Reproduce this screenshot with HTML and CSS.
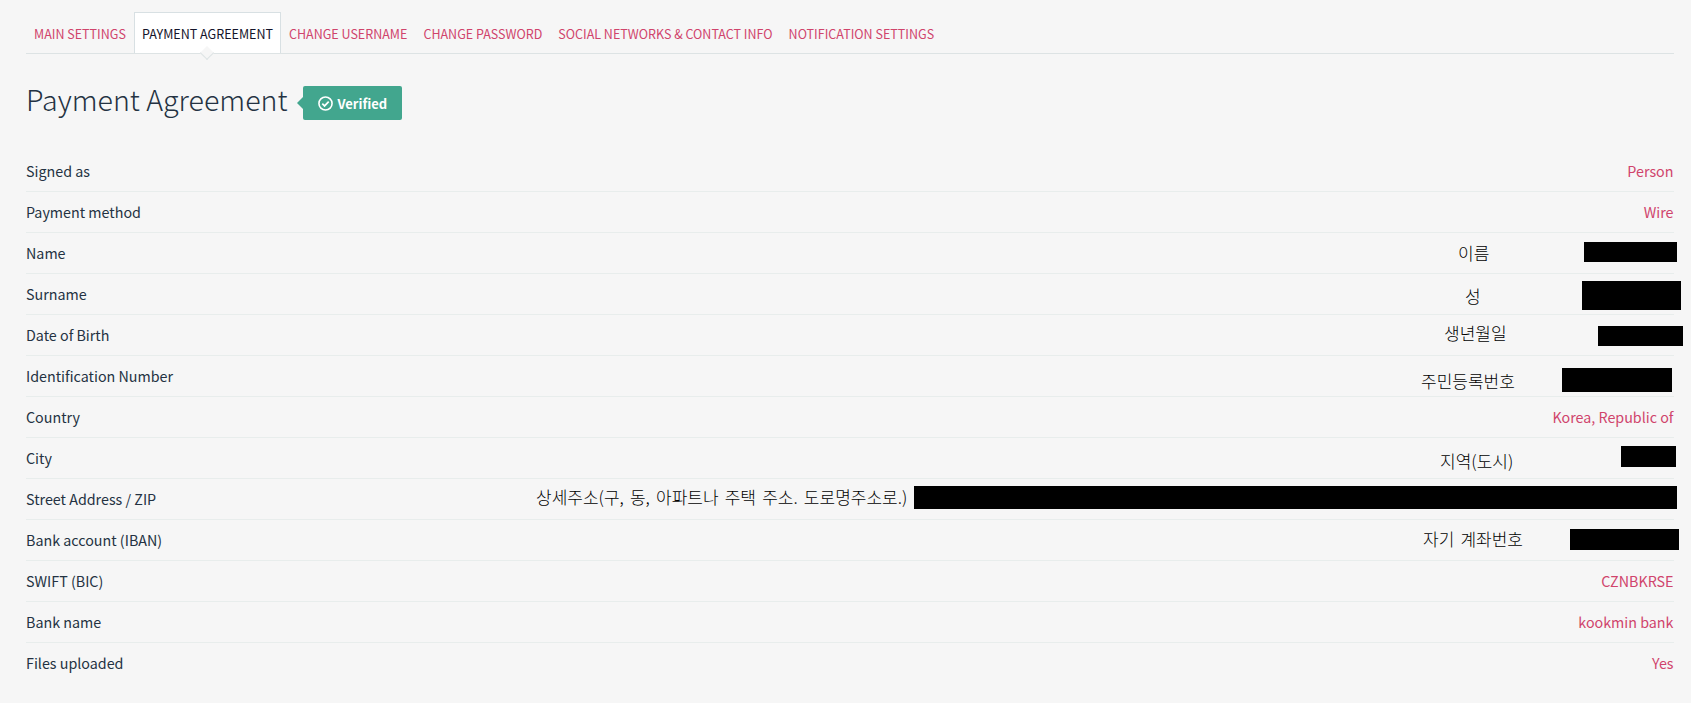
FILE: index.html
```html
<!DOCTYPE html>
<html lang="en">

<head>
    <meta charset="UTF-8">
    <meta name="viewport" content="width=device-width, initial-scale=1.0">
    <title>Payment Agreement</title>
    <link rel="stylesheet" href="styles.css">
</head>

<body>
    <div class="tabs">
        <a class="tab">Main settings</a>
        <a class="tab active">Payment agreement</a>
        <a class="tab">Change username</a>
        <a class="tab">Change password</a>
        <a class="tab">Social networks &amp; contact info</a>
        <a class="tab">Notification settings</a>
    </div>
    <div class="heading">
        <h1>Payment Agreement</h1>
        <span class="badge">
            <svg class="check" viewBox="0 0 16 16" width="15" height="15">
                <circle cx="8" cy="8" r="7" fill="none" stroke="#fff" stroke-width="1.7"></circle>
                <path d="M4.6 8.2l2.4 2.4 4.4-4.6" fill="none" stroke="#fff" stroke-width="1.8"></path>
            </svg>
            Verified
        </span>
    </div>
    <div class="rows">
        <div class="row"><span>Signed as</span><span class="value">Person</span></div>
        <div class="row"><span>Payment method</span><span class="value">Wire</span></div>
        <div class="row"><span>Name</span></div>
        <div class="row"><span>Surname</span></div>
        <div class="row"><span>Date of Birth</span></div>
        <div class="row"><span>Identification Number</span></div>
        <div class="row"><span>Country</span><span class="value">Korea, Republic of</span></div>
        <div class="row"><span>City</span></div>
        <div class="row"><span>Street Address / ZIP</span></div>
        <div class="row"><span>Bank account (IBAN)</span></div>
        <div class="row"><span>SWIFT (BIC)</span><span class="value">CZNBKRSE</span></div>
        <div class="row"><span>Bank name</span><span class="value">kookmin bank</span></div>
        <div class="row"><span>Files uploaded</span><span class="value">Yes</span></div>
    </div>

    <!-- notes and black bars pasted over the screenshot -->
    <span class="note note-name">이름</span>
    <span class="note note-surname">성</span>
    <span class="note note-birth">생년월일</span>
    <span class="note note-id">주민등록번호</span>
    <span class="note note-city">지역(도시)</span>
    <span class="note note-street">상세주소(구, 동, 아파트나 주택 주소. 도로명주소로.)</span>
    <span class="note note-bank">자기 계좌번호</span>

    <div class="bar bar-name"></div>
    <div class="bar bar-surname"></div>
    <div class="bar bar-birth"></div>
    <div class="bar bar-id"></div>
    <div class="bar bar-city"></div>
    <div class="bar bar-street"></div>
    <div class="bar bar-bank"></div>
</body>

</html>
```

FILE: styles.css
```css
body {
    margin: 0;
    padding: 0 17px 0 26px;
    background-color: #f6f6f6;
    color: #243242;
    font-family: "Noto Sans CJK KR", "Noto Sans", sans-serif;
    font-size: 14.3px;
    position: relative;
    height: 703px;
    box-sizing: border-box;
    overflow: hidden;
}
.tabs {
    display: flex;
    padding-top: 12px;
    border-bottom: 1px solid #dde3e4;
    height: 41px;
}
.tab {
    padding: 0 7px;
    font-size: 12.52px;
    line-height: 41px;
    text-transform: uppercase;
    color: #d0446c;
    border: 1px solid transparent;
    border-bottom: 0;
    position: relative;
}
.tab.active {
    background-color: #fff;
    color: #14142a;
    border-color: #d8e0e3;
    height: 41px;
    box-sizing: border-box;
}
.tab.active::after {
    content: "";
    position: absolute;
    left: 50%;
    bottom: -5px;
    width: 9px;
    height: 9px;
    margin-left: -5px;
    background-color: #f6f6f6;
    border-right: 1px solid #dde3e4;
    border-bottom: 1px solid #dde3e4;
    transform: rotate(45deg);
}
.heading {
    display: flex;
    align-items: center;
    padding-top: 32px;
    margin-bottom: 31px;
}
h1 {
    margin: 0 0 8px;
    font-size: 28.6px;
    font-weight: 300;
    line-height: 26px;
    color: #243242;
}
.badge {
    position: relative;
    display: flex;
    align-items: center;
    gap: 5px;
    margin-left: 15px;
    height: 34px;
    padding: 0 15px;
    background-color: #42a68e;
    border-radius: 2px;
    color: #fff;
    font-size: 13px;
    font-weight: 700;
}
.badge::before {
    content: "";
    position: absolute;
    left: -6px;
    top: 11px;
    border-top: 6px solid transparent;
    border-bottom: 6px solid transparent;
    border-right: 6px solid #42a68e;
}
.row {
    display: flex;
    justify-content: space-between;
    align-items: center;
    height: 38px;
    padding-bottom: 2px;
    border-bottom: 1px solid #e8edec;
}
.row:last-child {
    border-bottom: 0;
}
.value {
    color: #d0446c;
    padding-right: 0.5px;
}
.note {
    position: absolute;
    font-size: 17px;
    font-weight: 300;
    word-spacing: 2.4px;
    line-height: 22px;
    color: #000;
    white-space: nowrap;
}
.note-name { left: 1458px; top: 242px; }
.note-surname { left: 1465px; top: 285px; }
.note-birth { left: 1444px; top: 322px; }
.note-id { left: 1421px; top: 370px; }
.note-city { left: 1440px; top: 450px; }
.note-street { left: 536px; top: 486px; }
.note-bank { left: 1423px; top: 528px; }
.bar {
    position: absolute;
    background-color: #000;
}
.bar-name { left: 1584px; top: 242px; width: 93px; height: 20px; }
.bar-surname { left: 1582px; top: 281px; width: 99px; height: 29px; }
.bar-birth { left: 1598px; top: 326px; width: 85px; height: 20px; }
.bar-id { left: 1562px; top: 368px; width: 110px; height: 24px; }
.bar-city { left: 1621px; top: 446px; width: 55px; height: 21px; }
.bar-street { left: 914px; top: 486px; width: 763px; height: 23px; }
.bar-bank { left: 1570px; top: 529px; width: 109px; height: 21px; }
```
